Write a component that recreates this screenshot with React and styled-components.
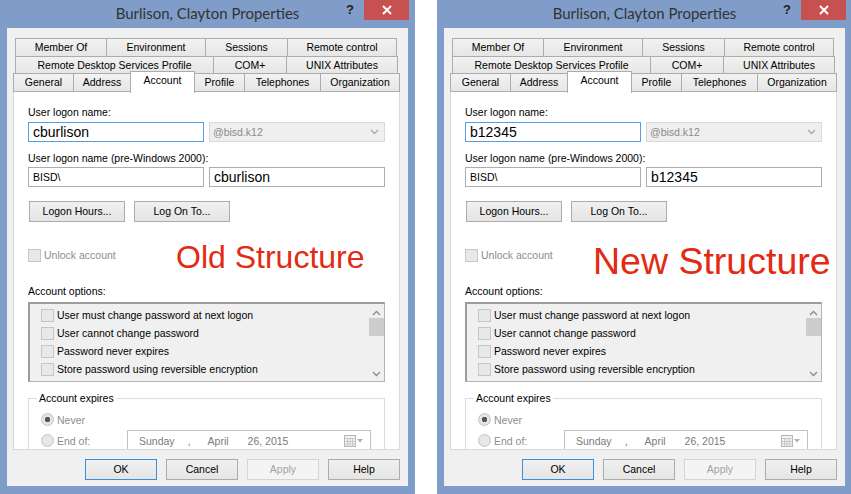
import React from 'react'
import styled, { createGlobalStyle } from 'styled-components'

const GlobalStyle = createGlobalStyle`
  html, body {
    margin: 0;
    padding: 0;
    background: #fff;
  }
  body {
    width: 851px;
    height: 494px;
    overflow: hidden;
    font-family: "Liberation Sans", Arial, sans-serif;
  }
`

const dialogs = [
  { logon: 'cburlison', note: 'Old Structure', size: 32, indent: 148, drop: 0 },
  { logon: 'b12345', note: 'New Structure', size: 37.5, indent: 128, drop: 2 },
]

const topTabs = [
  { h: 19, tabs: [['Member Of', 92], ['Environment', 100], ['Sessions', 83], ['Remote control', 110]] },
  { h: 18, tabs: [['Remote Desktop Services Profile', 199], ['COM+', 74], ['UNIX Attributes', 112]] },
]
const mainTabs = [['General', 61], ['Address', 58], ['Account', 65], ['Profile', 51], ['Telephones', 77], ['Organization', 80]]

const options = [
  'User must change password at next logon',
  'User cannot change password',
  'Password never expires',
  'Store password using reversible encryption',
]

const Chevron = ({ up, color = '#8a8a8a' }) => (
  <svg width="9" height="6" viewBox="0 0 9 6">
    <path d={up ? 'M1 5 L4.5 1.5 L8 5' : 'M1 1 L4.5 4.5 L8 1'} fill="none" stroke={color} strokeWidth="1.3" />
  </svg>
)

const CalendarIcon = () => (
  <svg width="20" height="12" viewBox="0 0 20 12">
    <rect x="0.5" y="0.5" width="11" height="11" fill="#f4f4f4" stroke="#b5b5b5" />
    <path d="M0.5 3.5 H11.5 M0.5 6.5 H11.5 M0.5 9 H11.5 M3.5 3.5 V11.5 M6 3.5 V11.5 M8.5 3.5 V11.5" stroke="#c8c8c8" strokeWidth="1" />
    <path d="M13 4 L19 4 L16 7.5 Z" fill="#b0b0b0" />
  </svg>
)

function Dialog({ data }) {
  return (
    <Window>
      <TitleBar>
        <Title>Burlison, Clayton Properties</Title>
        <Controls>
          <HelpGlyph>?</HelpGlyph>
          <CloseButton>
            <svg width="10" height="10" viewBox="0 0 10 10">
              <path d="M1 1 L9 9 M9 1 L1 9" stroke="#fff" strokeWidth="2" />
            </svg>
          </CloseButton>
        </Controls>
      </TitleBar>
      <Client>
        {topTabs.map((row, i) => (
          <TabRow key={i} $inset={2} $h={row.h}>
            {row.tabs.map(([name, w]) => (
              <Tab key={name} style={{ width: w }}>{name}</Tab>
            ))}
          </TabRow>
        ))}
        <TabRow $inset={0} $h={19}>
          {mainTabs.map(([name, w]) => (
            <Tab key={name} $active={name === 'Account'} style={{ width: w }}>{name}</Tab>
          ))}
        </TabRow>
        <Panel>
          <Label $top={13}>User logon name:</Label>
          <FieldRow $top={3}>
            <TextBox $focused $big>{data.logon}</TextBox>
            <SelectBox>
              <span>@bisd.k12</span>
              <Chevron color="#a8a8a8" />
            </SelectBox>
          </FieldRow>
          <Label $top={9}>User logon name (pre-Windows 2000):</Label>
          <FieldRow $top={2}>
            <TextBox>BISD\</TextBox>
            <TextBox $big>{data.logon}</TextBox>
          </FieldRow>
          <ButtonRow $top={14}>
            <Button>Logon Hours...</Button>
            <Button>Log On To...</Button>
          </ButtonRow>
          <NoteRow $indent={data.indent}>
            <CheckItem $disabled $top={7}>
              <Box />
              <span>Unlock account</span>
            </CheckItem>
            <Note $size={data.size} $drop={data.drop}>{data.note}</Note>
          </NoteRow>
          <Label $top={7}>Account options:</Label>
          <ListBox>
            <ListItems>
              {options.map((o) => (
                <CheckItem key={o}>
                  <Box />
                  <span>{o}</span>
                </CheckItem>
              ))}
            </ListItems>
            <ScrollBar>
              <Chevron up />
              <Thumb />
              <ScrollSpacer />
              <Chevron />
            </ScrollBar>
          </ListBox>
          <Group>
            <Legend>Account expires</Legend>
            <RadioRow>
              <Radio $checked />
              <RadioLabel>Never</RadioLabel>
            </RadioRow>
            <RadioRow>
              <Radio />
              <RadioLabel $width={70}>End of:</RadioLabel>
              <DatePicker>
                <DatePart $gap={0}>Sunday</DatePart>
                <DatePart $gap={13}>,</DatePart>
                <DatePart $gap={17}>April</DatePart>
                <DatePart $gap={19}>26, 2015</DatePart>
                <DateIcon>
                  <CalendarIcon />
                </DateIcon>
              </DatePicker>
            </RadioRow>
          </Group>
        </Panel>
        <Footer>
          <Button $wide $focused>OK</Button>
          <Button $wide>Cancel</Button>
          <Button $wide $disabled>Apply</Button>
          <Button $wide>Help</Button>
        </Footer>
      </Client>
    </Window>
  )
}

export default function App() {
  return (
    <>
      <GlobalStyle />
      <Page>
        {dialogs.map((d) => (
          <Dialog key={d.logon} data={d} />
        ))}
      </Page>
    </>
  )
}

const Page = styled.div`
  display: flex;
  gap: 22px;
  width: 851px;
  height: 494px;
  overflow: hidden;
`

const Window = styled.div`
  flex: none;
  width: 415px;
  height: 494px;
  background: #7f9dc8;
  display: flex;
  flex-direction: column;
`

const TitleBar = styled.div`
  height: 28px;
  display: grid;
  grid-template-columns: 1fr auto 1fr;
`

const Title = styled.div`
  grid-column: 2;
  font-family: Lato, "Noto Sans", sans-serif;
  font-size: 15px;
  line-height: 27px;
  color: #333;
  white-space: nowrap;
`

const Controls = styled.div`
  grid-column: 3;
  justify-self: end;
  display: flex;
  align-items: flex-start;
  gap: 7px;
  margin-right: 6px;
`

const HelpGlyph = styled.span`
  width: 14px;
  text-align: center;
  font-family: "Liberation Sans", Arial, sans-serif;
  font-weight: bold;
  font-size: 13px;
  line-height: 20px;
  color: #222;
`

const CloseButton = styled.div`
  width: 45px;
  height: 20px;
  background: #c75050;
  display: flex;
  align-items: center;
  justify-content: center;
`

const Client = styled.div`
  flex: 1;
  margin: 0 7px 8px;
  background: #f0f0f0;
  padding: 10px 8px 0 6px;
  display: flex;
  flex-direction: column;
  min-height: 0;
`

const TabRow = styled.div`
  display: flex;
  flex: none;
  height: ${(p) => p.$h}px;
  margin-left: ${(p) => p.$inset}px;
  margin-bottom: -1px;
  position: relative;
  z-index: 1;
`

const Tab = styled.div`
  flex: none;
  box-sizing: border-box;
  margin-right: -1px;
  border: 1px solid #acacac;
  background: ${(p) => (p.$active ? '#fff' : 'linear-gradient(#f2f2f2, #e6e6e6)')};
  font-size: 10.5px;
  line-height: 16px;
  text-align: center;
  color: #000;
  white-space: nowrap;
  ${(p) =>
    p.$active &&
    `
    height: 22px;
    margin-top: -2px;
    border-bottom: none;
    position: relative;
    z-index: 2;
    line-height: 17px;
  `}
`

const Panel = styled.div`
  height: 359px;
  flex: none;
  box-sizing: border-box;
  background: #fff;
  border: 1px solid #d9d9d9;
  padding: 0 14px;
  overflow: hidden;
  display: flex;
  flex-direction: column;
  align-items: flex-start;

  & > * {
    flex: none;
  }
`

const Label = styled.div`
  margin-top: ${(p) => p.$top}px;
  font-size: 10.5px;
  line-height: 14px;
  color: #000;
  white-space: nowrap;
`

const FieldRow = styled.div`
  display: flex;
  gap: 5px;
  margin-top: ${(p) => p.$top}px;
`

const TextBox = styled.div`
  box-sizing: border-box;
  width: 176px;
  height: 20px;
  border: 1px solid ${(p) => (p.$focused ? '#569de5' : '#abadb3')};
  background: #fff;
  padding: 0 4px;
  font-size: ${(p) => (p.$big ? '14px' : '10.5px')};
  line-height: 18px;
  color: #000;
`

const SelectBox = styled.div`
  box-sizing: border-box;
  width: 176px;
  height: 20px;
  border: 1px solid #d9d9d9;
  background: #efefef;
  padding: 0 5px 0 3px;
  display: flex;
  align-items: center;
  justify-content: space-between;
  font-size: 10.5px;
  color: #8a8a8a;
`

const ButtonRow = styled.div`
  display: flex;
  gap: 9px;
  margin-top: ${(p) => p.$top}px;
  padding-left: 1px;
`

const Button = styled.div`
  box-sizing: border-box;
  width: ${(p) => (p.$wide ? '72px' : '96px')};
  height: 21px;
  border: 1px solid ${(p) => (p.$focused ? '#3c8fdc' : p.$disabled ? '#d5d5d5' : '#acacac')};
  background: ${(p) => (p.$disabled ? '#f4f4f4' : 'linear-gradient(#f0f0f0, #e5e5e5)')};
  color: ${(p) => (p.$disabled ? '#a3a3a3' : '#000')};
  font-size: 10.5px;
  line-height: 19px;
  text-align: center;
`

const NoteRow = styled.div`
  display: grid;
  grid-template-columns: ${(p) => p.$indent}px auto;
  align-items: start;
  height: 36px;
  margin-top: 19px;
  align-self: stretch;
`

const Note = styled.div`
  margin-top: ${(p) => p.$drop}px;
  font-family: "Liberation Sans", Arial, sans-serif;
  font-size: ${(p) => p.$size}px;
  line-height: ${(p) => p.$size}px;
  color: #e32a12;
  white-space: nowrap;
`

const CheckItem = styled.div`
  display: flex;
  align-items: center;
  gap: 3px;
  height: ${(p) => (p.$disabled ? '14px' : '18px')};
  margin-top: ${(p) => p.$top || 0}px;
  font-size: 10.5px;
  color: ${(p) => (p.$disabled ? '#8d8d8d' : '#000')};
  white-space: nowrap;
`

const Box = styled.span`
  box-sizing: border-box;
  width: 13px;
  height: 13px;
  flex: none;
  border: 1px solid #c6c6c6;
  background: #e8e8e8;
`

const ListBox = styled.div`
  box-sizing: border-box;
  width: 357px;
  height: 80px;
  margin-top: 4px;
  border: 1px solid #b4b4b4;
  border-top: 2px solid #9c9c9c;
  border-left: 2px solid #9c9c9c;
  background: #f0f0f0;
  display: flex;
`

const ListItems = styled.div`
  flex: 1;
  padding: 2px 0 0 11px;
`

const ScrollBar = styled.div`
  width: 15px;
  display: flex;
  flex-direction: column;
  align-items: center;
  padding: 6px 0 4px;
  box-sizing: border-box;
  gap: 2px;
`

const Thumb = styled.div`
  width: 15px;
  height: 18px;
  background: #cdcdcd;
`

const ScrollSpacer = styled.div`
  flex: 1;
`

const Group = styled.fieldset`
  box-sizing: border-box;
  width: 357px;
  margin: 9px 0 0;
  padding: 4px 0 0 12px;
  border: 1px solid #dcdcdc;
  min-width: 0;
`

const Legend = styled.legend`
  margin-left: -4px;
  padding: 0 2px;
  font-size: 10.5px;
  line-height: 14px;
  color: #000;
`

const RadioRow = styled.div`
  display: flex;
  align-items: center;
  height: 21px;
`

const Radio = styled.span`
  box-sizing: border-box;
  width: 13px;
  height: 13px;
  flex: none;
  border-radius: 50%;
  border: 1px solid #c3c3c3;
  background: radial-gradient(circle, ${(p) => (p.$checked ? '#555 0 2.5px, #e4e4e4 3px' : '#e9e9e9 0, #e4e4e4')});
`

const RadioLabel = styled.span`
  width: ${(p) => (p.$width ? `${p.$width}px` : 'auto')};
  margin-left: 3px;
  font-size: 10.5px;
  color: #8d8d8d;
`

const DatePicker = styled.div`
  box-sizing: border-box;
  width: 244px;
  height: 22px;
  border: 1px solid #c2c2c2;
  background: #fff;
  display: flex;
  align-items: center;
  padding: 0 6px 0 11px;
  font-size: 10.5px;
  color: #7a7a7a;
`

const DatePart = styled.span`
  margin-left: ${(p) => p.$gap}px;
`

const DateIcon = styled.span`
  margin-left: auto;
  display: flex;
`

const Footer = styled.div`
  display: flex;
  flex: none;
  justify-content: flex-end;
  gap: 9px;
  margin-top: 9px;
`
